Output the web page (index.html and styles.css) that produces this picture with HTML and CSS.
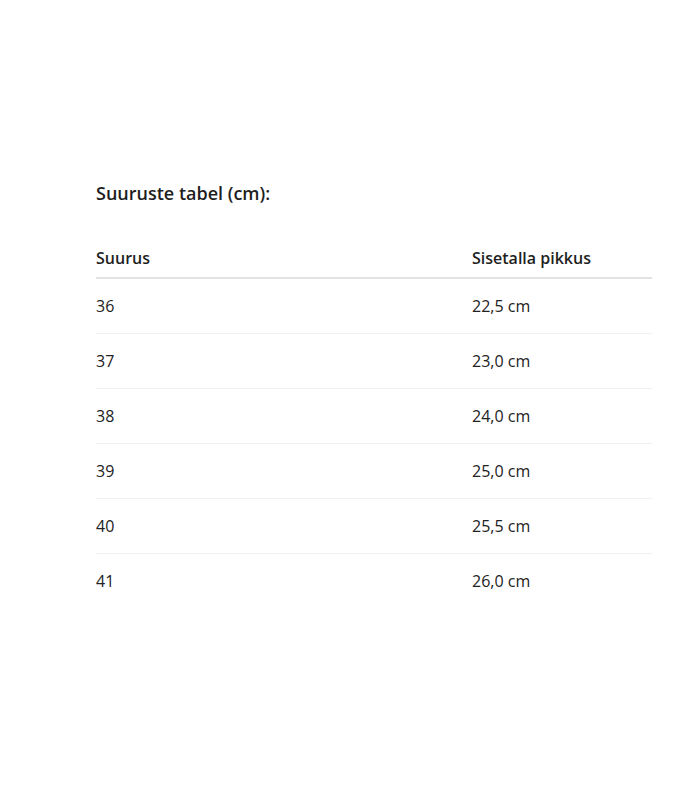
FILE: index.html
```html
<!DOCTYPE html>
<html lang="et">
<head>
<meta charset="utf-8">
<title>Suuruste tabel</title>
<link rel="stylesheet" href="styles.css">
</head>
<body>
<main class="page">
  <h2 class="title">Suuruste tabel (cm):</h2>
  <div class="table">
    <div class="row head"><div class="cell">Suurus</div><div class="cell">Sisetalla pikkus</div></div>
    <div class="row"><div class="cell">36</div><div class="cell">22,5 cm</div></div>
    <div class="row"><div class="cell">37</div><div class="cell">23,0 cm</div></div>
    <div class="row"><div class="cell">38</div><div class="cell">24,0 cm</div></div>
    <div class="row"><div class="cell">39</div><div class="cell">25,0 cm</div></div>
    <div class="row"><div class="cell">40</div><div class="cell">25,5 cm</div></div>
    <div class="row last"><div class="cell">41</div><div class="cell">26,0 cm</div></div>
  </div>
</main>
</body>
</html>
```
FILE: styles.css
```css
* { box-sizing: border-box; }
body {
  margin: 0;
  background: #fff;
  color: #222;
  font-family: "Open Sans", "Noto Sans", sans-serif;
}
.page {
  padding: 180px 48px 0 96px;
  width: 700px;
}
.title {
  margin: 0 0 42px;
  font-size: 18px;
  line-height: 26px;
  font-weight: 600;
  color: #1e1e1e;
}
.table {
  width: 556px;
}
.row {
  display: grid;
  grid-template-columns: 376px 1fr;
  padding: 17px 0;
  border-bottom: 1px solid #f1f1f1;
  font-size: 16px;
  line-height: 20px;
}
.row.head {
  padding: 0 0 9px;
  border-bottom: 2px solid #e2e2e2;
  font-weight: 600;
  color: #1e1e1e;
}
.row.last { border-bottom: none; }
```
